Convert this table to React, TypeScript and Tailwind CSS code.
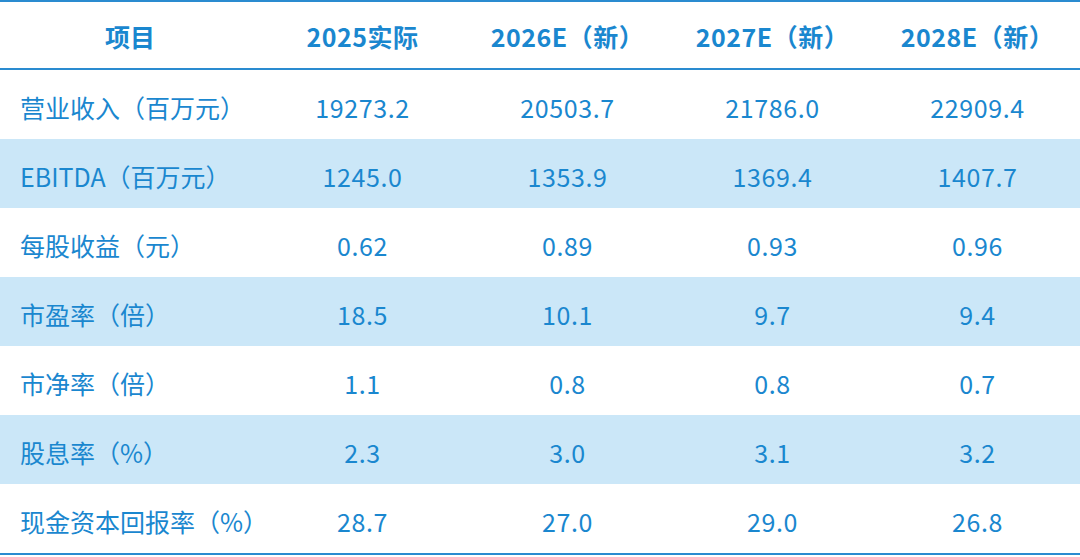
const headers = ["项目", "2025实际", "2026E（新）", "2027E（新）", "2028E（新）"]

const rows = [
  ["营业收入（百万元）", "19273.2", "20503.7", "21786.0", "22909.4"],
  ["EBITDA（百万元）", "1245.0", "1353.9", "1369.4", "1407.7"],
  ["每股收益（元）", "0.62", "0.89", "0.93", "0.96"],
  ["市盈率（倍）", "18.5", "10.1", "9.7", "9.4"],
  ["市净率（倍）", "1.1", "0.8", "0.8", "0.7"],
  ["股息率（%）", "2.3", "3.0", "3.1", "3.2"],
  ["现金资本回报率（%）", "28.7", "27.0", "29.0", "26.8"],
]

export default function App() {
  return (
    <div
      className="w-[1080px] h-[557px] bg-white text-[#1a87cf]"
      style={{ fontFamily: '"Noto Sans CJK SC", "Noto Sans", sans-serif' }}
    >
      <div className="border-t-2 border-b-2 border-[#2a8bd0]">
        <div className="grid grid-cols-[260px_205px_205px_205px_205px] h-[66px] items-center text-[25px] font-bold leading-none pt-[3px]">
          {headers.map((h, i) => (
            <div key={h} className={i === 0 ? "text-center" : "text-center tracking-[0.5px]"}>
              {h}
            </div>
          ))}
        </div>
      </div>
      <div className="border-b-2 border-[#2a8bd0]">
        {rows.map((r, i) => (
          <div
            key={r[0]}
            className={`grid grid-cols-[260px_205px_205px_205px_205px] h-[69px] items-center text-[25px] leading-none pt-[5px] ${
              i % 2 === 1 ? "bg-[#cbe7f8]" : "bg-white"
            }`}
          >
            <div className="pl-[20px]">{r[0]}</div>
            {r.slice(1).map((v, j) => (
              <div key={j} className="text-center tracking-[0.6px]">
                {v}
              </div>
            ))}
          </div>
        ))}
      </div>
    </div>
  )
}
